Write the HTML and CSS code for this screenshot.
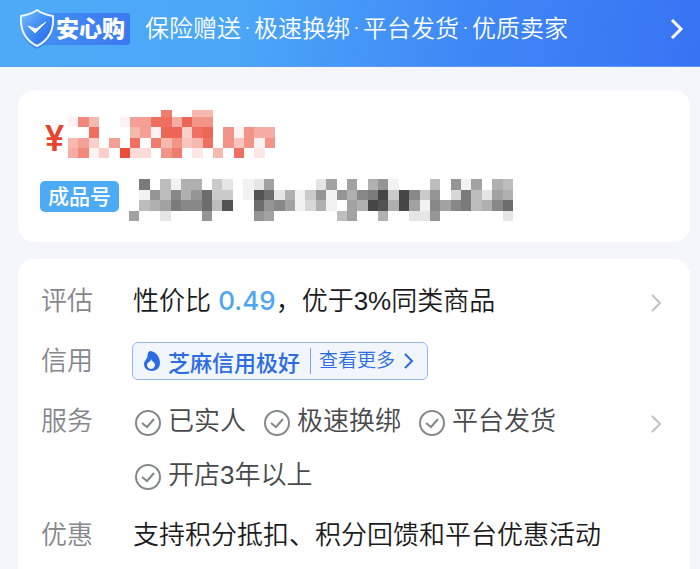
FILE: index.html
```html
<!DOCTYPE html>
<html lang="zh-CN">
<head>
    <meta charset="UTF-8">
    <meta name="viewport" content="width=device-width, initial-scale=1.0">
    <title>商品详情</title>
    <link rel="stylesheet" href="styles.css">
</head>
<body>
    <a class="banner" href="#">
        <span class="brand">
            <svg class="brand-shield" viewBox="0 0 38 42" aria-hidden="true">
                <defs>
                    <linearGradient id="shieldFill" x1="0" y1="0" x2="1" y2="1">
                        <stop offset="0" stop-color="#7cc0fb"/>
                        <stop offset="0.5" stop-color="#3f8cf5"/>
                        <stop offset="1" stop-color="#1f5fe6"/>
                    </linearGradient>
                </defs>
                <path d="M19 4C23 7 29 9 36 10C37 22 33 34 19 41C5 34 1 22 2 10C9 9 15 7 19 4Z" fill="#2f6fe0" opacity="0.6"/>
                <path d="M19 2C23 5 29 7 35 8C36 20 33 31 19 38C5 31 2 20 3 8C9 7 15 5 19 2Z" fill="url(#shieldFill)" stroke="#eaf6ff" stroke-width="2" stroke-linejoin="round"/>
                <path d="M10 18L17 25L28 14L18 21Z" fill="#fff" stroke="#fff" stroke-width="1" stroke-linejoin="round"/>
            </svg>
            <span class="brand-name">安心购</span>
        </span>
        <span class="banner-text">保险赠送<i>·</i>极速换绑<i>·</i>平台发货<i>·</i>优质卖家</span>
        <svg class="banner-arrow" viewBox="0 0 14 22" aria-hidden="true"><path d="M2 2L11 11L2 20"/></svg>
    </a>

    <main>
        <section class="card summary">
            <div class="price">
                <span class="currency">¥</span>
                <svg class="mosaic mosaic-price" id="priceMosaic" role="img" aria-label="价格已隐藏"></svg>
            </div>
            <div class="title">
                <span class="tag">成品号</span>
                <svg class="mosaic mosaic-title" id="titleMosaic" role="img" aria-label="标题已隐藏"></svg>
            </div>
        </section>

        <section class="card details">
            <div class="row">
                <span class="label">评估</span>
                <p class="value">性价比 <b class="score">0.49</b>，优于3%同类商品</p>
                <svg class="arrow" viewBox="0 0 12 18" aria-hidden="true"><path d="M2 1L10 9L2 17"/></svg>
            </div>

            <div class="row">
                <span class="label">信用</span>
                <button class="credit" type="button">
                    <svg class="credit-icon" viewBox="0 0 16 20" aria-hidden="true">
                        <path d="M6 0C11 0 16 5 16 12C16 17 12 20 8 20C3 20 0 17 0 13C0 10 2 9 3 7C4 5 3 1 6 0Z" fill="#2d6be4"/>
                        <path d="M7 8C8 11 11 11 11 14C11 16 9 18 7 18C5 18 3 16 3 14C3 11 7 11 7 8Z" fill="#f1f6fd"/>
                    </svg>
                    <strong>芝麻信用极好</strong>
                    <span class="more">查看更多</span>
                    <svg class="credit-arrow" viewBox="0 0 10 16" aria-hidden="true"><path d="M1 1L8 8L1 15"/></svg>
                </button>
            </div>

            <div class="row row-services">
                <span class="label">服务</span>
                <ul class="services">
                    <li><svg viewBox="0 0 26 26" aria-hidden="true"><circle cx="13" cy="13" r="12"/><path d="M7 13L12 17L19 9"/></svg>已实人</li>
                    <li><svg viewBox="0 0 26 26" aria-hidden="true"><circle cx="13" cy="13" r="12"/><path d="M7 13L12 17L19 9"/></svg>极速换绑</li>
                    <li><svg viewBox="0 0 26 26" aria-hidden="true"><circle cx="13" cy="13" r="12"/><path d="M7 13L12 17L19 9"/></svg>平台发货</li>
                    <li><svg viewBox="0 0 26 26" aria-hidden="true"><circle cx="13" cy="13" r="12"/><path d="M7 13L12 17L19 9"/></svg>开店3年以上</li>
                </ul>
                <svg class="arrow" viewBox="0 0 12 18" aria-hidden="true"><path d="M2 1L10 9L2 17"/></svg>
            </div>

            <div class="row">
                <span class="label">优惠</span>
                <p class="value">支持积分抵扣、积分回馈和平台优惠活动</p>
            </div>
        </section>
    </main>

    <script src="mosaic.js"></script>
</body>
</html>
```
FILE: styles.css
```css
* {
    box-sizing: border-box;
}

body {
    margin: 0;
    min-height: 100vh;
    display: flex;
    flex-direction: column;
    font-family: "Liberation Sans", "Noto Sans CJK SC", sans-serif;
    font-size: 26px;
    font-weight: 350;
    line-height: 38px;
    color: #1c1c1e;
    background-color: #f4f6fb;
}

p, ul {
    margin: 0;
    padding: 0;
}

.banner {
    display: flex;
    align-items: center;
    padding: 8px 16px 16px 18px;
    color: #fff;
    text-decoration: none;
    background: linear-gradient(100deg, #4fabf7 0%, #4ba6f7 35%, #3d85f6 70%, #3873f2 100%);
    border-bottom: 1px solid #5b9cf3;
}

.brand {
    display: flex;
    align-items: center;
    width: 112px;
    margin-right: 15px;
}

.brand-shield {
    flex: none;
    position: relative;
    width: 38px;
    height: 42px;
}

.brand-name {
    flex: 1;
    margin-left: -20px;
    padding-left: 20px;
    font-size: 23px;
    font-weight: 900;
    line-height: 32px;
    white-space: nowrap;
    border-radius: 3px;
    background: linear-gradient(90deg, #4390f5, #3b78f0);
}

.banner-text {
    flex: 1;
    font-size: 24px;
    white-space: nowrap;
}

.banner-text i {
    display: inline-block;
    width: 13px;
    font-family: Roboto, sans-serif;
    font-style: normal;
    text-align: center;
}

.banner-arrow {
    width: 14px;
    height: 22px;
}

.banner-arrow path {
    fill: none;
    stroke: #fff;
    stroke-width: 3;
}

main {
    flex: 1;
    display: flex;
    flex-direction: column;
    gap: 17px;
    padding: 23px 10px 0 18px;
}

.card {
    padding: 20px 22px 21px;
    background: #fff;
    border-radius: 16px;
}

.price, .title {
    display: flex;
}

.price {
    align-items: flex-end;
    gap: 4px;
    height: 48px;
    padding-left: 5px;
    margin-bottom: 21px;
}

.currency {
    width: 19px;
    color: #e8432e;
    font-family: Roboto, sans-serif;
    font-size: 36px;
    font-weight: 500;
}

.title {
    align-items: flex-start;
    gap: 10px;
}

.tag {
    width: 79px;
    margin-top: 2px;
    color: #fff;
    font-size: 21px;
    font-weight: 500;
    line-height: 31px;
    text-align: center;
    white-space: nowrap;
    background: #4dabf5;
    border-radius: 5px;
}

.mosaic {
    flex: none;
    height: 42px;
}

.mosaic-price {
    width: 207px;
    height: 48px;
    color: #e8351f;
}

.mosaic-title {
    width: 384px;
    color: #1e1e1e;
}

.details {
    flex: 1;
    display: flex;
    flex-direction: column;
    gap: 22px;
    padding-top: 23px;
    padding-bottom: 8px;
    border-radius: 16px 16px 0 0;
}

.row {
    display: flex;
    align-items: center;
    padding: 0 6px 0 1px;
}

.label {
    width: 92px;
    color: #85878c;
}

.value {
    flex: 1;
    white-space: nowrap;
}

.score {
    color: #4da6ee;
    font-family: Inter, sans-serif;
    font-weight: 500;
}

.arrow {
    flex: none;
    width: 12px;
    height: 18px;
    margin-top: 4px;
}

.arrow path {
    fill: none;
    stroke: #bfc1c7;
    stroke-width: 2;
}

.credit {
    display: flex;
    align-items: center;
    height: 38px;
    margin-left: -1px;
    padding: 0 13px 0 11px;
    color: #2d6be4;
    font-family: inherit;
    font-size: 19px;
    font-weight: 350;
    background: #f1f6fd;
    border: 1px solid #94b8e8;
    border-radius: 6px;
    cursor: pointer;
}

.credit-icon {
    width: 16px;
    height: 20px;
    margin-right: 8px;
}

.credit strong {
    font-size: 22px;
    font-weight: 500;
}

.more {
    margin: 0 9px 0 10px;
    padding-left: 8px;
    line-height: 26px;
    border-left: 1px solid #7f9fd8;
}

.credit-arrow {
    width: 10px;
    height: 16px;
}

.credit-arrow path {
    fill: none;
    stroke: #2d6be4;
    stroke-width: 2;
}

.row-services {
    align-items: flex-start;
}

.row-services .arrow {
    margin-top: 13px;
}

.services {
    flex: 1;
    display: flex;
    flex-wrap: wrap;
    gap: 16px 18px;
    padding-left: 2px;
    list-style: none;
    color: #48494c;
}

.services li {
    display: flex;
    align-items: center;
    gap: 7px;
}

.services svg {
    width: 26px;
    height: 26px;
    margin-top: 3px;
    fill: none;
    stroke: #85878b;
    stroke-width: 2;
}
```
FILE: mosaic.js
```js
// one hex digit per cell, 0-f is the strength of the colour
const priceRows = [
    '.........b..66......',
    '1a6..188cc7d99......',
    '..c...681dd4cd.91977',
    '684.8.c.b6956c.95919',
    '7a14.f33.9b.2.6.c.2.'
];

const titleRows = [
    '.a.5166.42.127....27.7.681...5.817.65',
    '.185968b44.1db261481869ae4e948.3a5276',
    '.567a99b5d..b8971361.76ed6e71979a569b',
    '7..2...8....87......57..6..228......2'
];

function drawMosaic(id, rows, top) {
    const svg = document.getElementById(id);
    svg.setAttribute('viewBox', `0 ${top} ${rows[0].length} ${rows.length - top}`);
    svg.setAttribute('preserveAspectRatio', 'none');
    svg.setAttribute('shape-rendering', 'crispEdges');

    rows.forEach((row, y) => {
        [...row].forEach((cell, x) => {
            if (cell === '.') return;
            const rect = document.createElementNS('http://www.w3.org/2000/svg', 'rect');
            rect.setAttribute('x', x);
            rect.setAttribute('y', y);
            rect.setAttribute('width', 1);
            rect.setAttribute('height', 1);
            rect.setAttribute('fill', 'currentColor');
            rect.setAttribute('fill-opacity', parseInt(cell, 16) / 17);
            svg.appendChild(rect);
        });
    });
}

drawMosaic('priceMosaic', priceRows, 0.3);
drawMosaic('titleMosaic', titleRows, 0);
```
